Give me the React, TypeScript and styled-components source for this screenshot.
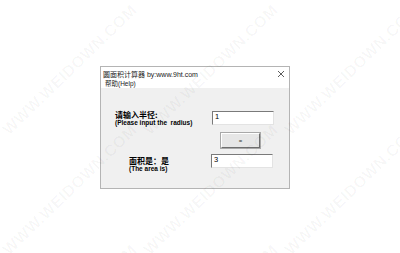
import React from 'react';
import styled, { createGlobalStyle } from 'styled-components';

const GlobalStyle = createGlobalStyle`
    html, body {
        margin: 0;
        padding: 0;
        background: #ffffff;
        font-family: "Liberation Sans", "Noto Sans CJK SC", sans-serif;
    }
`;

const Page = styled.div`
    position: relative;
    width: 400px;
    height: 253px;
    overflow: hidden;
    padding: 66px 0 0 100px;
    box-sizing: border-box;
`;

const Window = styled.div`
    width: 190px;
    height: 123px;
    box-sizing: border-box;
    border: 1px solid #b4b4b4;
    background: #f0f0f0;
    display: flex;
    flex-direction: column;
`;

const TitleBar = styled.div`
    height: 13px;
    box-sizing: border-box;
    background: #ffffff;
    display: flex;
    align-items: center;
    justify-content: space-between;
    padding: 0 4px 0 2px;
    font-size: 7px;
    color: #222;
`;

const CloseIcon = styled.svg`
    width: 8px;
    height: 8px;
`;

const MenuBar = styled.div`
    height: 8px;
    box-sizing: border-box;
    background: #ffffff;
    padding: 0 0 0 4px;
    font-size: 6.5px;
    line-height: 8px;
    color: #222;
`;

const Body = styled.div`
    flex: 1;
    display: flex;
    flex-direction: column;
    padding: 22px 0 0 0;
`;

const Row = styled.div<{ $indent: number; $fieldX: number }>`
    display: grid;
    grid-template-columns: ${p => p.$fieldX}px 62px;
    align-items: start;
    padding-left: ${p => p.$indent}px;
`;

const Label = styled.div<{ $top: number }>`
    display: flex;
    flex-direction: column;
    margin-top: ${p => p.$top}px;
    color: #000;
    font-weight: 700;
`;

const Cn = styled.span`
    font-size: 8px;
    line-height: 9px;
    font-family: "Noto Sans CJK SC", sans-serif;
`;

const En = styled.span`
    font-size: 6.5px;
    line-height: 8px;
    font-family: "Liberation Sans", sans-serif;
`;

const Field = styled.div<{ $top: number }>`
    height: 14px;
    box-sizing: border-box;
    margin-top: ${p => p.$top}px;
    background: #ffffff;
    border-top: 1px solid #7a7a7a;
    border-left: 1px solid #7a7a7a;
    border-right: 1px solid #e3e3e3;
    border-bottom: 1px solid #e3e3e3;
    font-size: 7.5px;
    line-height: 9px;
    padding: 0 2px;
    color: #000;
`;

const ButtonRow = styled.div`
    display: flex;
    padding: 6px 0 6px 120px;
`;

const EqButton = styled.div`
    width: 39px;
    height: 15px;
    box-sizing: border-box;
    background: #e6e6e6;
    border-top: 1px solid #ffffff;
    border-left: 1px solid #ffffff;
    border-right: 1px solid #6e6e6e;
    border-bottom: 1px solid #6e6e6e;
    outline: 1px solid #a8a8a8;
    display: flex;
    align-items: center;
    justify-content: center;
    font-size: 6px;
    color: #333;
`;

const Mark = styled.div<{ $x: number; $y: number }>`
    position: absolute;
    left: ${p => p.$x - 95}px;
    top: ${p => p.$y - 9}px;
    width: 190px;
    text-align: center;
    transform: rotate(-44deg);
    font-family: "Liberation Sans", sans-serif;
    font-weight: 700;
    font-size: 16px;
    letter-spacing: 0.5px;
    color: rgba(0, 0, 0, 0.035);
    pointer-events: none;
    white-space: nowrap;
`;

const marks: Array<[number, number]> = [];
for (let r = 0; r < 3; r++) {
    for (let c = 0; c < 4; c++) {
        marks.push([70 + c * 141, 70 + r * 120]);
    }
}

export default function App() {
    return (
        <>
            <GlobalStyle />
            <Page>
                <Window>
                    <TitleBar>
                        <span>圆面积计算器 by:www.9ht.com</span>
                        <CloseIcon viewBox="0 0 8 8">
                            <path d="M1 1 L7 7 M7 1 L1 7" stroke="#333" strokeWidth="0.8" />
                        </CloseIcon>
                    </TitleBar>
                    <MenuBar>帮助(Help)</MenuBar>
                    <Body>
                        <Row $indent={14} $fieldX={97}>
                            <Label $top={0}>
                                <Cn>请输入半径:</Cn>
                                <En>(Please input the&nbsp; radius)</En>
                            </Label>
                            <Field $top={1}>1</Field>
                        </Row>
                        <ButtonRow>
                            <EqButton>=</EqButton>
                        </ButtonRow>
                        <Row $indent={28} $fieldX={82}>
                            <Label $top={2}>
                                <Cn>面积是：是</Cn>
                                <En>(The area is)</En>
                            </Label>
                            <Field $top={0}>3</Field>
                        </Row>
                    </Body>
                </Window>
                {marks.map(([x, y], i) => (
                    <Mark key={i} $x={x} $y={y}>WWW.WEIDOWN.COM</Mark>
                ))}
            </Page>
        </>
    );
}
